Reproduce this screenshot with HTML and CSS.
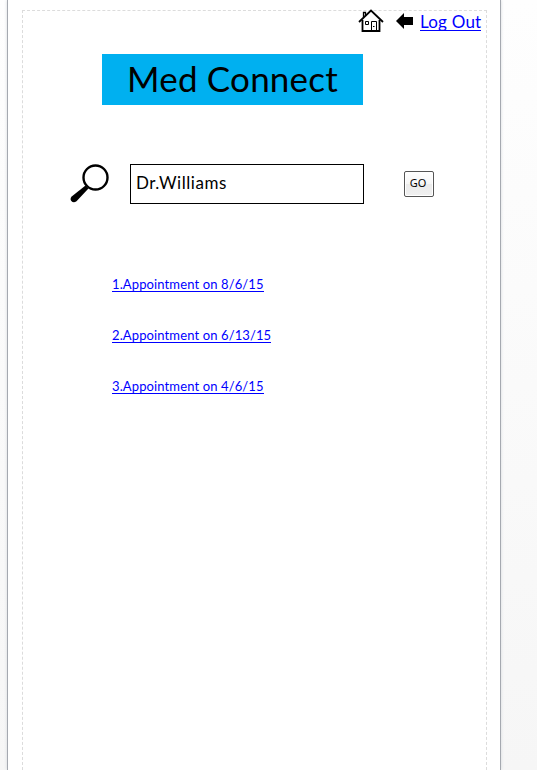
FILE: index.html
```html
<!DOCTYPE html>
<html lang="en">
<head>
<meta charset="utf-8">
<title>Med Connect</title>
<link rel="stylesheet" href="styles.css">
</head>
<body>
<div class="page">
  <main class="sheet">
    <nav class="topbar">
      <svg class="home" width="26" height="24" viewBox="0 0 26 24" fill="none" stroke="#000">
        <path d="M1 13L13 1.5L25 13" stroke-width="1.8"/>
        <path d="M4.5 11V22H21.5V11" stroke-width="1.8"/>
        <path d="M5.5 8V3.5H7.5V6.5" stroke-width="1.3"/>
        <path d="M7.5 12.5H10.5V15.5H7.5ZM13.5 21V12.5H18.5V21" stroke-width="1"/>
        <path d="M15 17.5H16.5" stroke-width="1"/>
      </svg>
      <svg class="back" width="17" height="16" viewBox="0 0 17 16"><path d="M0 8L8 0V4H17V12H8V16Z"/></svg>
      <a class="logout" href="#">Log Out</a>
    </nav>
    <h1 class="title"><span>Med Connect</span></h1>
    <form class="search">
      <svg class="lens" width="40" height="40" viewBox="0 0 40 40">
        <circle cx="25.5" cy="13.5" r="12" fill="none" stroke="#000" stroke-width="2.4"/>
        <path d="M15.5 21.5L18.5 24.5L6.5 37.3Q3.5 39.5 1.3 37Q-.5 34.5 2 32.2Z"/>
      </svg>
      <div class="field">Dr.Williams</div>
      <button class="go" type="button">GO</button>
    </form>
    <div class="results">
      <a href="#">1.Appointment on 8/6/15</a>
      <a href="#">2.Appointment on 6/13/15</a>
      <a href="#">3.Appointment on 4/6/15</a>
    </div>
  </main>
</div>
</body>
</html>
```
FILE: styles.css
```css
* { box-sizing: border-box; }
body {
  margin: 0;
  height: 770px;
  overflow: hidden;
  background: linear-gradient(#fefefe, #f6f6f6);
  font-family: Lato, "Liberation Sans", sans-serif;
  color: #000;
}
a { color: #00f; text-decoration: none; }
.page {
  width: 494px;
  height: 770px;
  margin-left: 7px;
  padding: 10px 13px 0 14px;
  background: #fff;
  border: solid #a5a9b0;
  border-width: 0 1px;
  box-shadow: 0 0 3px #d5d8dc;
}
.sheet {
  width: 465px;
  height: 760px;
  border: 1px dashed #dcdcdc;
  border-bottom: 0;
}
.topbar {
  display: flex;
  height: 22px;
  padding-right: 5px;
  justify-content: flex-end;
  align-items: flex-start;
}
.home { margin: -2px 12px 0 0; }
.back { margin: 2px 7px 0 0; }
.logout {
  width: 61px;
  height: 20px;
  font-size: 17px;
  line-height: 22px;
  letter-spacing: .2px;
  white-space: nowrap;
  border-bottom: 1px solid #00f;
}
.title {
  width: 261px;
  height: 51px;
  margin: 21px 0 0 79px;
  background: #00b0f0;
  font-size: 35px;
  font-weight: 400;
  line-height: 48px;
  letter-spacing: .2px;
  text-align: center;
  white-space: nowrap;
}
.search {
  display: flex;
  height: 40px;
  margin: 59px 0 0 47px;
}
.field {
  width: 234px;
  height: 40px;
  margin-left: 20px;
  padding-left: 5px;
  border: 1px solid #000;
  font-size: 17px;
  line-height: 36px;
  letter-spacing: .55px;
}
.go {
  width: 30px;
  height: 26px;
  margin: 7px 0 0 40px;
  padding: 0 2px 3px 0;
  border: 1px solid #555;
  border-radius: 2px;
  background: linear-gradient(#fff, #f6f6f6 48%, #ebebeb 50%, #f0f0f0);
  box-shadow: inset 0 0 0 1px #fff;
  font: 11px "Noto Sans", sans-serif;
  color: #000;
}
.results {
  display: flex;
  flex-direction: column;
  align-items: flex-start;
  gap: 35px;
  margin: 72px 0 0 89px;
}
.results a {
  height: 16px;
  font-size: 13px;
  line-height: 16px;
  letter-spacing: .12px;
  border-bottom: 1px solid #00f;
}
```
